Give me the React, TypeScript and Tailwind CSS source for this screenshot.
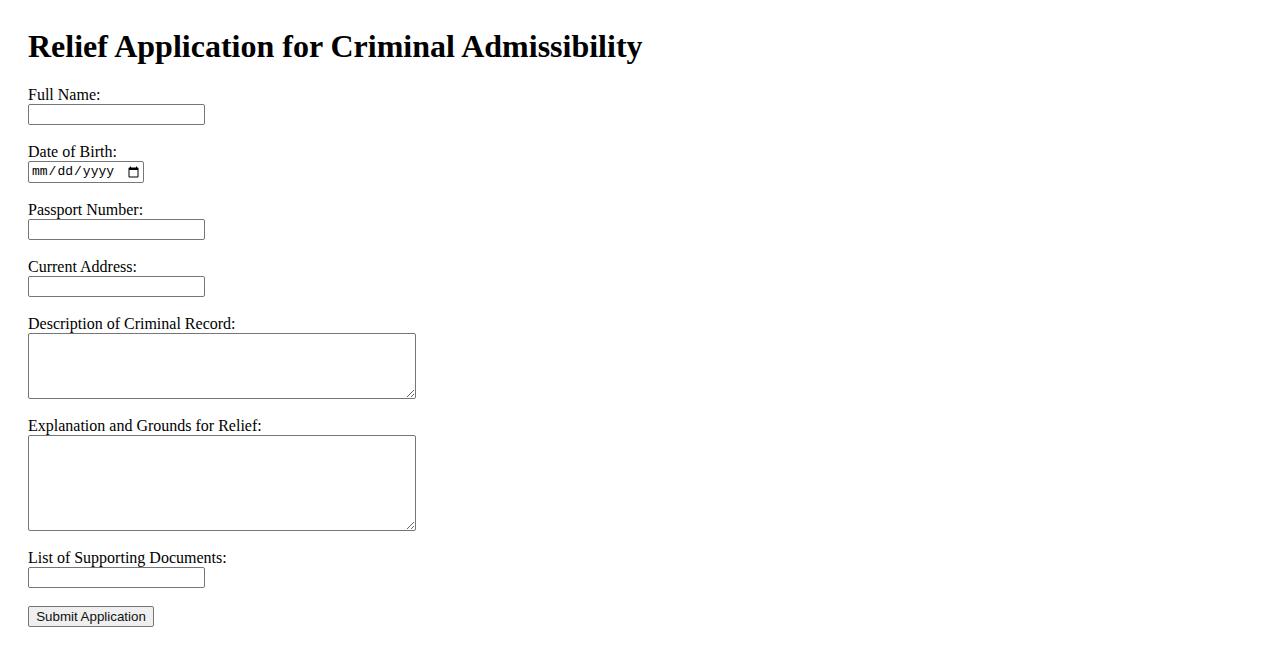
export default function App() {
  const fields: { label: string; kind: "text" | "date" | "area"; h?: string }[] = [
    { label: "Full Name:", kind: "text" },
    { label: "Date of Birth:", kind: "date" },
    { label: "Passport Number:", kind: "text" },
    { label: "Current Address:", kind: "text" },
    { label: "Description of Criminal Record:", kind: "area", h: "h-[66px]" },
    { label: "Explanation and Grounds for Relief:", kind: "area", h: "h-[96px]" },
    { label: "List of Supporting Documents:", kind: "text" },
  ];

  return (
    <div className="min-h-[650px] bg-white pl-[28px] pt-[28px] text-black font-['Liberation_Serif','Times_New_Roman',serif]">
      <h1 className="text-[32px] font-bold leading-[37px] mb-[21px]">Relief Application for Criminal Admissibility</h1>

      <form className="flex flex-col items-start gap-[18px]" onSubmit={e => e.preventDefault()}>
        {fields.map(f => (
          <div key={f.label} className="flex flex-col items-start">
            <label className="block text-[16px] leading-[18px] h-[18px]">{f.label}</label>
            {f.kind === "text" && (
              <input
                type="text"
                className="w-[177px] h-[21px] border border-[#767676] rounded-[2px] bg-white px-[2px] text-[13px] font-['Liberation_Sans',Arial,sans-serif]"
              />
            )}
            {f.kind === "date" && (
              <input
                type="date"
                className="w-[116px] h-[22px] border border-[#767676] rounded-[2px] bg-white pl-[2px] pr-[1px] text-[13px] font-['Liberation_Mono',monospace]"
              />
            )}
            {f.kind === "area" && (
              <textarea
                className={`w-[388px] ${f.h} border border-[#767676] rounded-[2px] bg-white resize p-[2px] text-[13px] font-['Liberation_Mono',monospace]`}
              />
            )}
          </div>
        ))}
        <button
          type="submit"
          className="w-[126px] h-[21px] border border-[#767676] rounded-[2px] bg-[#efefef] text-[13.33px] leading-[16px] text-[#111] font-['Liberation_Sans',Arial,sans-serif]"
        >
          Submit Application
        </button>
      </form>
    </div>
  );
}
